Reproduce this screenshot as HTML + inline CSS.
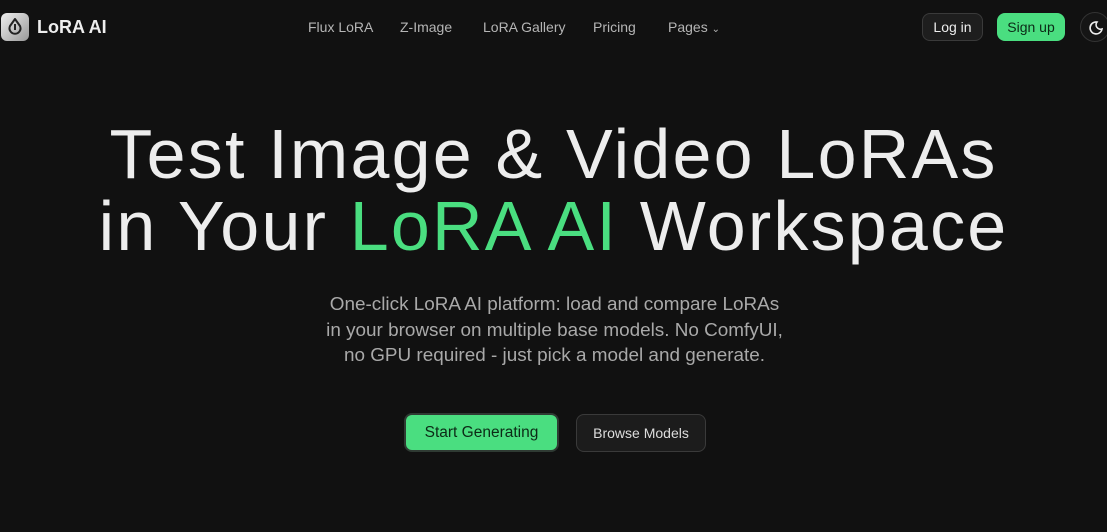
<!DOCTYPE html>
<html><head><style>
*{margin:0;padding:0;box-sizing:border-box}
body{width:1107px;height:532px;background:#111111;font-family:"Liberation Sans",sans-serif;position:relative;overflow:hidden;color:#eee}
.a{position:absolute}
.nav{font-size:14px;color:#b5b5b5;top:19px}
h1{position:absolute;left:0;width:1107px;text-align:center;font-weight:400;font-size:70px;line-height:72px;top:118px;color:#ededed;letter-spacing:2.2px}
.g{color:#4ade80}
p{position:absolute;left:0;width:1109px;text-align:center;font-size:18.9px;line-height:25.5px;top:292px;color:#a9a9a9}
.btn{position:absolute;border-radius:8px;font-size:15px;text-align:center}
</style></head><body>
<div class="a" style="left:1px;top:13px;width:28px;height:28px;border-radius:6px;background:linear-gradient(135deg,#eee,#999)">
<svg width="28" height="28" viewBox="0 0 28 28"><path d="M14 6 L9 13 A5.5 5.5 0 1 0 19 13 Z" fill="none" stroke="#222" stroke-width="2" stroke-linejoin="round"/><line x1="14" y1="11" x2="14" y2="17" stroke="#222" stroke-width="2"/></svg></div>
<div class="a" style="left:37px;top:17px;font-size:18px;font-weight:bold;color:#eee">LoRA AI</div>
<div class="a nav" style="left:308px">Flux LoRA</div>
<div class="a nav" style="left:400px">Z-Image</div>
<div class="a nav" style="left:483px">LoRA Gallery</div>
<div class="a nav" style="left:593px">Pricing</div>
<div class="a nav" style="left:668px">Pages <span style="font-size:10px">⌄</span></div>
<div class="btn" style="left:922px;top:13px;width:61px;height:28px;background:#1e1e1e;border:1px solid #3a3a3a;line-height:26px;color:#eee;font-size:14px">Log in</div>
<div class="btn" style="left:997px;top:13px;width:68px;height:28px;background:#4ade80;line-height:28px;color:#0c2a16;font-size:14px">Sign up</div>
<div class="a" style="left:1080px;top:12px;width:30px;height:30px;border-radius:50%;border:1px solid #333;background:#151515">
<svg width="30" height="30" viewBox="0 0 30 30"><path d="M16 9 A6 6 0 1 0 21 16 A4.5 4.5 0 0 1 16 9 Z" fill="none" stroke="#eee" stroke-width="1.6"/></svg></div>
<h1>Test Image &amp; Video LoRAs<br>in Your <span class="g">LoRA AI</span> Workspace</h1>
<p>One-click LoRA AI platform: load and compare LoRAs<br>in your browser on multiple base models. No ComfyUI,<br>no GPU required - just pick a model and generate.</p>
<div class="btn" style="left:404px;top:413px;width:155px;height:39px;background:#4ade80;border:2px solid #2f3a33;line-height:35px;color:#0c2a16;font-size:15.5px">Start Generating</div>
<div class="btn" style="left:576px;top:414px;width:130px;height:38px;background:#1c1c1c;border:1px solid #3a3a3a;line-height:36px;color:#ddd;font-size:14px">Browse Models</div>
</body></html>
